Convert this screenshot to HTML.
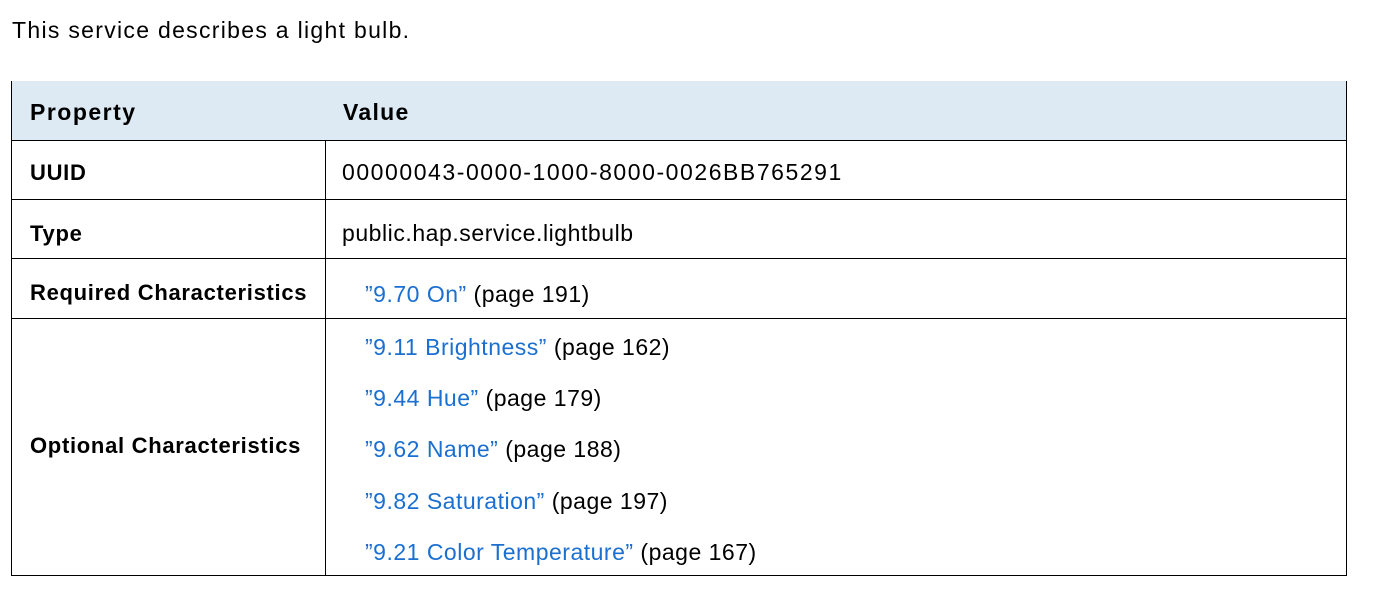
<!DOCTYPE html>
<html><head><style>
body{margin:0;width:1380px;height:598px;background:#fff;font-family:"Liberation Sans",sans-serif;color:#000;position:relative;overflow:hidden}
.a{position:absolute;white-space:nowrap}
.t{font-size:23px;letter-spacing:0.5px}
.b{font-weight:bold;font-size:22px;letter-spacing:0.7px}
.l{color:#1a6fd0}
.h{position:absolute;background:#000;height:1px}
.v{position:absolute;background:#000;width:1px}
</style></head><body>
<div class="a t" style="left:12px;top:17px;letter-spacing:1.3px">This service describes a light bulb.</div>
<div style="position:absolute;left:11px;top:81px;width:1335px;height:59px;background:#dde9f3"></div>
<div class="v" style="left:11px;top:81px;height:495px"></div>
<div class="v" style="left:1346px;top:81px;height:495px"></div>
<div class="v" style="left:325px;top:140px;height:436px"></div>
<div class="h" style="left:11px;top:140px;width:1336px"></div>
<div class="h" style="left:11px;top:199px;width:1336px"></div>
<div class="h" style="left:11px;top:258px;width:1336px"></div>
<div class="h" style="left:11px;top:318px;width:1336px"></div>
<div class="h" style="left:11px;top:575px;width:1336px"></div>
<div class="a b" style="left:30px;top:99px;font-size:23px;letter-spacing:1.5px">Property</div>
<div class="a b" style="left:343px;top:99px;font-size:23px;letter-spacing:1.3px">Value</div>
<div class="a b" style="left:30px;top:160px">UUID</div>
<div class="a t" style="left:342px;top:159px;letter-spacing:1.55px">00000043-0000-1000-8000-0026BB765291</div>
<div class="a b" style="left:30px;top:221px">Type</div>
<div class="a t" style="left:342px;top:220px;letter-spacing:0.55px">public.hap.service.lightbulb</div>
<div class="a b" style="left:30px;top:280px">Required Characteristics</div>
<div class="a t" style="left:365px;top:281px"><span class="l">”9.70 On”</span> (page 191)</div>
<div class="a b" style="left:30px;top:433px">Optional Characteristics</div>
<div class="a t" style="left:365px;top:334px"><span class="l">”9.11 Brightness”</span> (page 162)</div>
<div class="a t" style="left:365px;top:385px"><span class="l">”9.44 Hue”</span> (page 179)</div>
<div class="a t" style="left:365px;top:436px"><span class="l">”9.62 Name”</span> (page 188)</div>
<div class="a t" style="left:365px;top:488px"><span class="l">”9.82 Saturation”</span> (page 197)</div>
<div class="a t" style="left:365px;top:539px"><span class="l">”9.21 Color Temperature”</span> (page 167)</div>
</body></html>
